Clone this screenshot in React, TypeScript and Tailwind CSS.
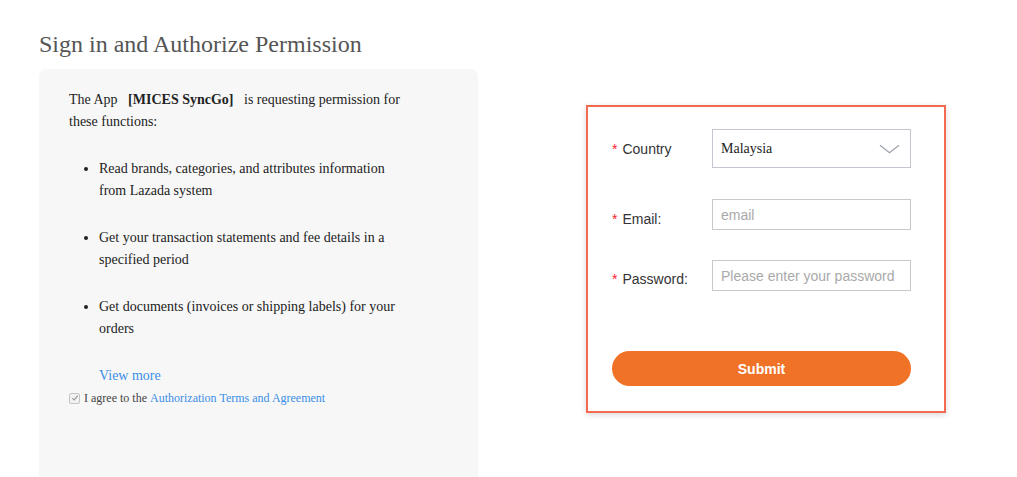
export default function App() {
  const serif = { fontFamily: '"Liberation Serif", "Times New Roman", serif' };
  const perms = [
    "Read brands, categories, and attributes information from Lazada system",
    "Get your transaction statements and fee details in a specified period",
    "Get documents (invoices or shipping labels) for your orders",
  ];

  return (
    <div className="flex h-[477px] w-full overflow-hidden bg-white" style={{ fontFamily: '"Liberation Sans", Arial, sans-serif' }}>
      {/* Left: permission info */}
      <div className="ml-[39px] flex w-[439px] flex-col pt-[29px]" style={serif}>
        <h1 className="mb-[10px] h-[30px] text-[24px] leading-[30px] text-[#555]">Sign in and Authorize Permission</h1>
        <div className="h-[440px] shrink-0 rounded-lg bg-[#f7f7f7] pl-[30px] pr-[70px] pt-[20px] text-[14px] leading-[22px] text-[#222]">
          <p>
            The App <b className="mx-[7px]">[MICES SyncGo]</b> is requesting permission for these functions:
          </p>
          <ul className="mt-[25px] list-disc pl-[30px]">
            {perms.map((p) => (
              <li key={p} className="mb-[25px]">
                {p}
              </li>
            ))}
          </ul>
          <a className="block pl-[30px] text-[#3b8ee6]">View more</a>
          <label className="mt-[2px] flex items-center text-[12px] leading-[18px] text-[#444]">
            <span className="mr-[4px] flex h-[11px] w-[11px] items-center justify-center rounded-[2px] border border-[#c4c4c4] bg-[#f2f2f2]">
              <svg viewBox="0 0 10 10" className="h-[8px] w-[8px]" fill="none" stroke="#9a9a9a" strokeWidth="1.5">
                <path d="M1.5 5.2 L4 7.5 L8.5 2" />
              </svg>
            </span>
            I agree to the&nbsp;<span className="text-[#3b8ee6]">Authorization Terms and Agreement</span>
          </label>
        </div>
      </div>

      {/* Right: sign-in form */}
      <div className="ml-[108px] mt-[105px] h-[308px] w-[360px] border-2 border-[#f26b50] bg-white px-[24px] pt-[22px] shadow-[0_2px_6px_rgba(0,0,0,0.15)]">
        <div className="flex items-center">
          <div className="mt-[2px] w-[100px] text-[14px] text-[#333]">
            <span className="mr-[5px] text-[#f5222d]">*</span>Country
          </div>
          <div className="flex h-[39px] w-[199px] items-center justify-between border border-[#c3c6cf] pl-[8px] pr-[10px] text-[14px] text-[#222]" style={serif}>
            Malaysia
            <svg viewBox="0 0 22 10" className="h-[10px] w-[21px]" fill="none" stroke="#9aa0ab" strokeWidth="1.2">
              <path d="M1 1 L11 9 L21 1" />
            </svg>
          </div>
        </div>
        <div className="mt-[31px] flex items-center">
          <div className="mt-[9px] w-[100px] text-[14px] text-[#333]">
            <span className="mr-[5px] text-[#f5222d]">*</span>Email:
          </div>
          <input
            placeholder="email"
            className="h-[31px] w-[199px] border border-[#c9c9c9] px-[8px] text-[14px] outline-none placeholder:text-[#a9a9a9]"
          />
        </div>
        <div className="mt-[30px] flex items-center">
          <div className="mt-[8px] w-[100px] text-[14px] text-[#333]">
            <span className="mr-[5px] text-[#f5222d]">*</span>Password:
          </div>
          <input
            type="password"
            placeholder="Please enter your password"
            className="h-[31px] w-[199px] border border-[#c9c9c9] px-[8px] text-[14px] outline-none placeholder:text-[#a9a9a9]"
          />
        </div>
        <button className="mt-[60px] h-[35px] w-[299px] rounded-full bg-[#f07227] pt-[1px] text-[14px] font-bold text-white">
          Submit
        </button>
      </div>
    </div>
  );
}
